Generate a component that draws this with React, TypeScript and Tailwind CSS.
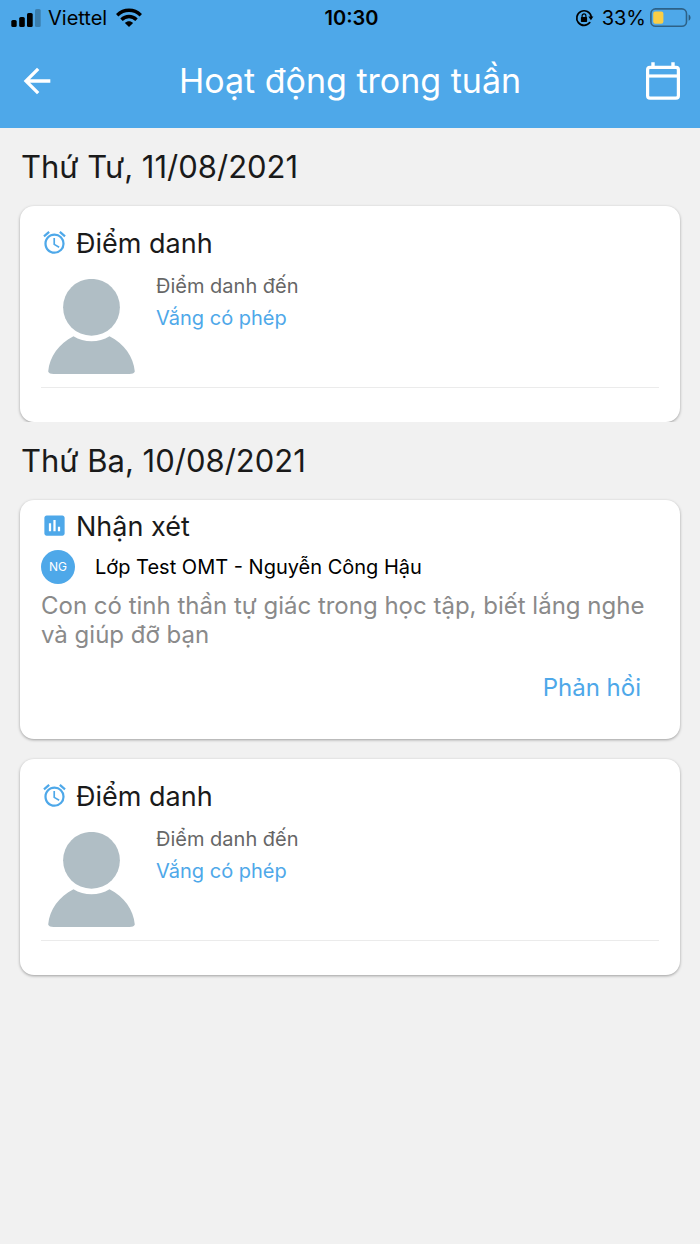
import type { ReactNode } from 'react';
import { MdAlarm, MdArrowBack, MdInsertChart } from 'react-icons/md';

function StatusBar() {
  return (
    <div className="grid h-9 grid-cols-3 items-center pr-2 pl-[11px] text-xl leading-6 text-black">
      <div className="flex items-center gap-[7px]">
        <svg className="h-[18px] w-[30px]" viewBox="0 0 30 18" aria-hidden="true">
          <rect x="0.3" y="11" width="5.4" height="7" rx="1.6" />
          <rect x="8.2" y="8" width="5.6" height="10" rx="1.6" />
          <rect x="16" y="4" width="5.7" height="14" rx="1.6" />
          <rect x="24" y="0" width="5.7" height="18" rx="1.6" opacity="0.25" />
        </svg>
        <span>Viettel</span>
        <svg className="h-5 w-[28px]" viewBox="-2 0 28 20" aria-hidden="true">
          <g fill="none" stroke="#000" strokeWidth="3.4">
            <path d="M1.2 7.2C8 .6 18 .6 24.8 7.2" />
            <path d="M5.5 11.7c4.3-4.3 10.7-4.3 15 0" />
          </g>
          <path d="M8.9 15c2.4-2.2 5.8-2.2 8.2 0L13 19.1z" />
        </svg>
      </div>
      <span className="text-center font-semibold">10:30</span>
      <div className="flex items-center justify-end gap-1">
        <svg className="mr-1 h-[18px] w-[19px]" viewBox="0 0 19 18" aria-hidden="true">
          <path
            d="M16.2 7.6A7.3 7.3 0 1 0 14.8 13.6"
            fill="none"
            stroke="#000"
            strokeWidth="1.7"
            strokeLinecap="round"
          />
          <path d="M13.4 7.4h5l-2.5 3.8z" />
          <rect x="5.9" y="8" width="6.2" height="5" rx="0.7" />
          <path d="M7.1 8.3V6.8a1.9 1.9 0 0 1 3.8 0v1.5" fill="none" stroke="#000" strokeWidth="1.2" />
        </svg>
        <span>33%</span>
        <svg className="h-5 w-[42px]" viewBox="0 0 42 20" aria-hidden="true">
          <rect
            x="0.9"
            y="0.9"
            width="35.6"
            height="17.4"
            rx="4.6"
            fill="none"
            stroke="#000"
            strokeOpacity="0.42"
            strokeWidth="1.6"
          />
          <rect x="3.2" y="3.5" width="10.2" height="12.3" rx="2.2" fill="#f9ce46" />
          <path d="M38.6 6.5c2.6 1 2.6 5.2 0 6.2z" fillOpacity="0.45" />
        </svg>
      </div>
    </div>
  );
}

function CalendarIcon() {
  return (
    <svg className="h-[38px] w-[34px]" viewBox="0 0 34 38" fill="none" stroke="#fff" aria-hidden="true">
      <rect x="1.6" y="5.4" width="30.8" height="30.8" rx="2.4" strokeWidth="3.2" />
      <path d="M2 14h30" strokeWidth="3.2" />
      <path d="M7 0.2v5M27 0.2v5" strokeWidth="3.4" />
    </svg>
  );
}

function Avatar() {
  return (
    <svg className="ml-[7px] h-[95px] w-[87px]" viewBox="0 0 87 95" fill="#b0bec5" aria-hidden="true">
      <circle cx="43.5" cy="28.3" r="28.4" />
      <path d="M25.5 57.2C36 64 51 64 61.5 57.2C76 64.5 85.5 77.5 86.8 92.5C86.5 94.2 84 95 81.5 95H5.5C3 95 .5 94.2 .2 92.5C1.5 77.5 11 64.5 25.5 57.2Z" />
    </svg>
  );
}

function DaySection({ title, children }: { title: string; children: ReactNode }) {
  return (
    <section className="overflow-hidden px-5 last:pb-5">
      <h2 className="flex h-[78px] items-center pl-px text-[31px] leading-9 text-[#1a1a1a]">{title}</h2>
      <div className="flex flex-col gap-5">{children}</div>
    </section>
  );
}

function Card({ children }: { children: ReactNode }) {
  return (
    <article className="rounded-[14px] bg-white px-[21px] shadow-[0_1px_3px_rgba(0,0,0,0.35)]">
      {children}
    </article>
  );
}

function CardTitle({ icon, children }: { icon: ReactNode; children: ReactNode }) {
  return (
    <h3 className="flex items-center gap-2 text-[27px] leading-8 text-[#1a1a1a]">
      <span className="mb-1 text-[#4ea8e9]">{icon}</span>
      {children}
    </h3>
  );
}

function AttendanceCard() {
  return (
    <Card>
      <div className="pt-[22px] pb-[34px]">
        <CardTitle icon={<MdAlarm size={27} />}>Điểm danh</CardTitle>
        <div className="flex gap-[21px] border-b border-[#ebebeb] pb-[13px]">
          <div className="pt-[19px]">
            <Avatar />
          </div>
          <div className="pt-[10px] text-xl leading-8">
            <p className="text-[#666666]">Điểm danh đến</p>
            <p className="text-[#4ea8e9]">Vắng có phép</p>
          </div>
        </div>
      </div>
    </Card>
  );
}

function CommentCard() {
  return (
    <Card>
      <div className="pt-[11px] pb-[33px]">
        <CardTitle icon={<MdInsertChart size={27} />}>Nhận xét</CardTitle>
        <div className="mt-[7px] flex items-center gap-5">
          <span className="flex size-[34px] items-center justify-center rounded-full bg-[#4ea8e9] text-xs text-white">
            NG
          </span>
          <span className="text-xl leading-8 text-black">Lớp Test OMT - Nguyễn Công Hậu</span>
        </div>
        <p className="mt-[7px] text-2xl leading-[29px] text-[#8a8a8a]">
          Con có tinh thần tự giác trong học tập, biết lắng nghe và giúp đỡ bạn
        </p>
        <div className="mt-[21px] flex justify-end pr-[18px]">
          <button type="button" className="text-2xl leading-9 text-[#4ea8e9]">
            Phản hồi
          </button>
        </div>
      </div>
    </Card>
  );
}

export default function App() {
  return (
    <div className="min-h-screen bg-[#f1f1f1] font-['Inter',sans-serif]">
      <header className="bg-[#4ea8e9]">
        <StatusBar />
        <div className="flex h-[92px] items-center justify-between pr-5 pb-0.5 pl-[17px] text-white">
          <button type="button" aria-label="Quay lại">
            <MdArrowBack size={40} />
          </button>
          <h1 className="text-[34px] leading-10">Hoạt động trong tuần</h1>
          <button type="button" aria-label="Lịch" className="flex w-[37px] justify-end">
            <CalendarIcon />
          </button>
        </div>
      </header>
      <main>
        <DaySection title="Thứ Tư, 11/08/2021">
          <AttendanceCard />
        </DaySection>
        <DaySection title="Thứ Ba, 10/08/2021">
          <CommentCard />
          <AttendanceCard />
        </DaySection>
      </main>
    </div>
  );
}
